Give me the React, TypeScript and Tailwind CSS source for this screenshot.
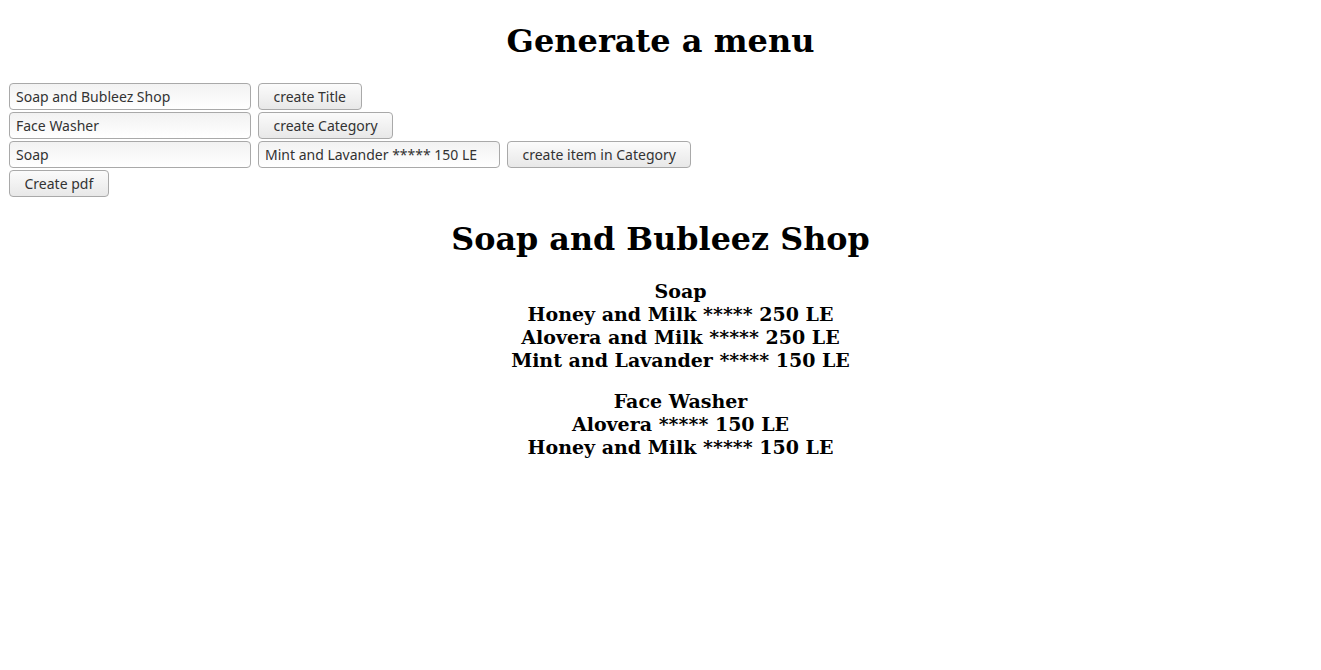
const serif = "font-['DejaVu_Serif','Liberation_Serif',serif]";
const ui = "font-['Noto_Sans','Open_Sans',sans-serif] text-[14px] text-[#333]";

const inputCls =
  `${ui} h-[27px] w-[242px] rounded-[4px] border border-[#a9a9a9] bg-gradient-to-b from-[#f2f2f2] to-white px-[6px] outline-none`;
const btnCls =
  `${ui} h-[27px] rounded-[4px] border border-[#a9a9a9] bg-gradient-to-b from-[#fbfbfb] to-[#e8e8e8] px-[14.5px]`;

const menu = [
  {
    name: "Soap",
    items: ["Honey and Milk ***** 250 LE", "Alovera and Milk ***** 250 LE", "Mint and Lavander ***** 150 LE"],
  },
  {
    name: "Face Washer",
    items: ["Alovera ***** 150 LE", "Honey and Milk ***** 150 LE"],
  },
];

export default function App() {
  return (
    <div className="min-h-screen bg-white px-[9px] pt-[22px] text-black">
      <h1 className={`${serif} text-center text-[32px] font-bold leading-[38px]`}>Generate a menu</h1>

      <div className="mt-[23px] flex flex-col gap-[2px]">
        <div className="flex gap-[7px]">
          <input className={inputCls} defaultValue="Soap and Bubleez Shop" />
          <button className={btnCls}>create Title</button>
        </div>
        <div className="flex gap-[7px]">
          <input className={inputCls} defaultValue="Face Washer" />
          <button className={btnCls}>create Category</button>
        </div>
        <div className="flex gap-[7px]">
          <input className={inputCls} defaultValue="Soap" />
          <input className={inputCls} defaultValue="Mint and Lavander ***** 150 LE" />
          <button className={btnCls}>create item in Category</button>
        </div>
        <div className="flex">
          <button className={btnCls}>Create pdf</button>
        </div>
      </div>

      <h1 className={`${serif} mt-[23px] text-center text-[31.8px] font-bold leading-[38px]`}>Soap and Bubleez Shop</h1>

      <div className="mt-[22px] flex flex-col gap-[18px] pl-[40px]">
        {menu.map((cat) => (
          <div key={cat.name} className={`${serif} text-center text-[19px] font-bold leading-[23px]`}>
            <div>{cat.name}</div>
            {cat.items.map((it) => (
              <div key={it}>{it}</div>
            ))}
          </div>
        ))}
      </div>
    </div>
  );
}
